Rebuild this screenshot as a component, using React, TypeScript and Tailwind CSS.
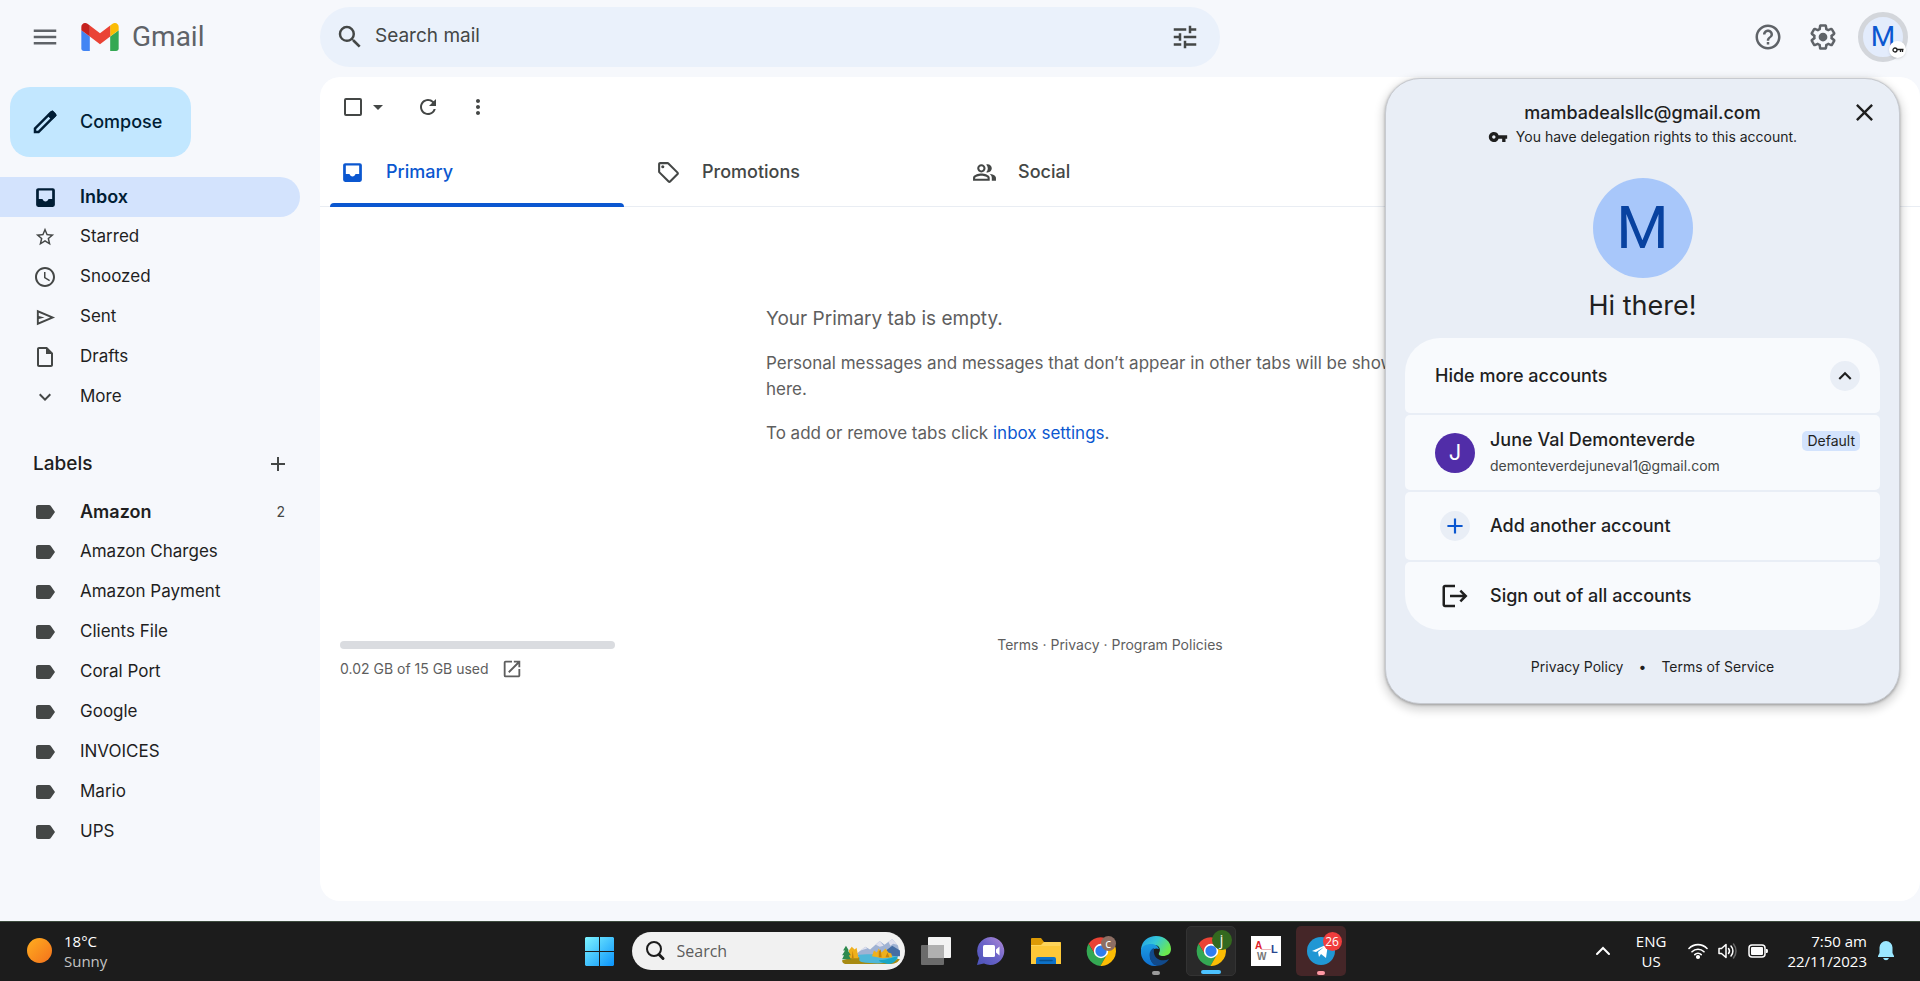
import type { ReactNode } from "react";
import {
  MdAccessTime,
  MdAdd,
  MdArrowDropDown,
  MdClose,
  MdExpandLess,
  MdExpandMore,
  MdHelpOutline,
  MdLabel,
  MdLogout,
  MdMenu,
  MdMoreVert,
  MdOpenInNew,
  MdOutlineInsertDriveFile,
  MdOutlinePeopleAlt,
  MdOutlineSell,
  MdRefresh,
  MdSearch,
  MdStarBorder,
  MdTune,
  MdVpnKey,
} from "react-icons/md";

interface NavItem {
  label: string;
  icon: ReactNode;
  active?: boolean;
}

interface LabelItem {
  label: string;
  count?: number;
}

const labels: LabelItem[] = [
  { label: "Amazon", count: 2 },
  { label: "Amazon Charges" },
  { label: "Amazon Payment" },
  { label: "Clients File" },
  { label: "Coral Port" },
  { label: "Google" },
  { label: "INVOICES" },
  { label: "Mario" },
  { label: "UPS" },
];

const navItems: NavItem[] = [
  { label: "Inbox", icon: <InboxIcon />, active: true },
  { label: "Starred", icon: <MdStarBorder size={22} /> },
  { label: "Snoozed", icon: <MdAccessTime size={24} /> },
  { label: "Sent", icon: <SendIcon /> },
  { label: "Drafts", icon: <MdOutlineInsertDriveFile size={24} /> },
  { label: "More", icon: <MdExpandMore size={24} /> },
];

function InboxIcon() {
  return (
    <svg width="25" height="25" viewBox="0 0 24 24" fill="currentColor" fillRule="evenodd">
      <path d="M5 3h14a2 2 0 0 1 2 2v14a2 2 0 0 1-2 2H5a2 2 0 0 1-2-2V5c0-1.100.9-2 2-2zm.600 2.300v8.200h3.500c.5 1.500 1.500 2.300 2.900 2.300s2.400-.8 2.900-2.300h3.500V5.300z" />
    </svg>
  );
}

function SendIcon() {
  return (
    <svg width="23" height="23" viewBox="0 0 24 24" fill="currentColor" fillRule="evenodd">
      <path d="M3 20V4l19 8zM5 17l11.850-5L5 7v3.500l6 1.500-6 1.500z" />
    </svg>
  );
}

function PencilIcon() {
  return (
    <svg width="30" height="30" viewBox="0 0 24 24" fill="currentColor">
      <path d="M5 19h1.425L16.200 9.225 14.775 7.800 5 17.575V19zm-2 2v-4.250L16.200 3.575q.3-.275.663-.425t.762-.15q.4 0 .775.15t.650.45L20.425 5q.3.275.437.650T21 6.400q0 .4-.138.763t-.437.662L7.250 21H3z" />
      <path d="M14 6l4-3.500 3.500 4L18 10z" />
    </svg>
  );
}

function GearIcon() {
  return (
    <svg width="30" height="30" viewBox="0 0 24 24" fill="currentColor">
      <path d="M13.850 22.250h-3.700c-.74 0-1.360-.54-1.450-1.270l-.27-1.890c-.27-.14-.53-.29-.79-.46l-1.800.72c-.7.26-1.470-.03-1.810-.65L2.200 15.530c-.35-.66-.2-1.440.36-1.880l1.530-1.190c-.01-.15-.02-.3-.02-.46 0-.15.01-.31.02-.46l-1.520-1.190c-.59-.45-.74-1.260-.37-1.880l1.850-3.190c.34-.62 1.110-.9 1.790-.63l1.810.73c.26-.17.52-.32.78-.46l.27-1.910c.09-.7.71-1.250 1.440-1.250h3.700c.74 0 1.360.54 1.450 1.270l.27 1.890c.27.14.53.29.79.46l1.800-.72c.71-.26 1.480.03 1.820.65l1.840 3.180c.36.66.2 1.440-.36 1.880l-1.520 1.190c.01.15.02.3.02.46s-.01.31-.02.46l1.520 1.190c.56.45.72 1.230.37 1.860l-1.860 3.220c-.34.62-1.110.9-1.800.63l-1.800-.72c-.26.17-.52.32-.78.46l-.27 1.910c-.1.68-.72 1.220-1.460 1.220zm-3.230-2h2.760l.37-2.550.53-.22c.44-.18.88-.44 1.340-.78l.45-.34 2.380.96 1.380-2.400-2.030-1.580.07-.56c.03-.26.06-.51.06-.78s-.03-.53-.06-.78l-.07-.56 2.030-1.580-1.390-2.400-2.390.96-.45-.35c-.42-.32-.87-.58-1.330-.77l-.52-.22-.37-2.550h-2.760l-.37 2.550-.53.21c-.44.19-.88.44-1.340.79l-.45.33-2.380-.95-1.390 2.390 2.030 1.580-.07.56a7 7 0 0 0-.06.79c0 .26.02.53.06.78l.07.56-2.030 1.580 1.380 2.400 2.390-.96.45.35c.43.33.86.58 1.330.77l.53.22.38 2.550z" />
      <circle cx="12" cy="12" r="3.500" />
    </svg>
  );
}

function GmailLogo() {
  return (
    <svg width="38" height="28" viewBox="52 42 88 66">
      <path fill="#4285f4" d="M58 108h14V74L52 59v43c0 3.320 2.690 6 6 6" />
      <path fill="#34a853" d="M120 108h14c3.320 0 6-2.690 6-6V59l-20 15" />
      <path fill="#fbbc04" d="M120 48v26l20-15v-8c0-7.420-8.470-11.650-14.400-7.200" />
      <path fill="#ea4335" d="M72 74V48l24 18 24-18v26L96 92" />
      <path fill="#c5221f" d="M52 51v8l20 15V48l-5.600-4.200c-5.940-4.450-14.400-.22-14.400 7.200" />
    </svg>
  );
}

function Header() {
  return (
    <header className="flex h-[77px] shrink-0 items-start">
      <div className="flex h-[74px] w-80 shrink-0 items-center pl-[30px]">
        <button aria-label="Main menu" className="text-[#5f6368]">
          <MdMenu size={30} />
        </button>
        <a href="#inbox" className="ml-[21px] flex items-center gap-[13px]">
          <GmailLogo />
          <span className="font-[Roboto,sans-serif] text-[28px] leading-8 text-[#5f6368]">Gmail</span>
        </a>
      </div>
      <label className="mt-[7px] flex h-[60px] w-[900px] min-w-0 items-center rounded-full bg-[#eaf1fb] pl-[15px] pr-5 text-[#444746]">
        <MdSearch size={30} className="shrink-0" />
        <input
          type="text"
          placeholder="Search mail"
          aria-label="Search mail"
          className="ml-[10px] h-10 min-w-0 flex-1 bg-transparent pb-1 text-[19px] text-[#1f1f1f] outline-none placeholder:text-[#444746]"
        />
        <button aria-label="Show search options">
          <MdTune size={30} />
        </button>
      </label>
      <div className="ml-auto flex h-[74px] shrink-0 items-center pr-3 text-[#5f6368]">
        <button aria-label="Support">
          <MdHelpOutline size={30} />
        </button>
        <button aria-label="Settings" className="ml-[25px]">
          <GearIcon />
        </button>
        <button
          aria-label="Google Account"
          className="relative ml-5 flex size-[50px] items-center justify-center rounded-full border-[5px] border-[#d3d6db] bg-[#e3ecfc] font-[Roboto,sans-serif] text-[28px] text-[#0b57d0]"
        >
          M
          <span className="absolute -bottom-px -right-[3px] flex size-[17px] items-center justify-center rounded-full bg-white text-[#1f1f1f] shadow">
            <svg width="12" height="6" viewBox="0 0 12 6" fill="none" stroke="currentColor" strokeWidth="1.300">
              <circle cx="3" cy="3" r="2" />
              <path d="M5 2.500h6.500M8.500 3v2M10.500 3v2" />
            </svg>
          </span>
        </button>
      </div>
    </header>
  );
}

function Sidebar() {
  return (
    <aside className="w-80 shrink-0 pr-5 pt-[10px] text-[17px] text-[#1f1f1f]">
      <button className="ml-[10px] flex h-[70px] items-center gap-5 rounded-[20px] bg-[#c2e7ff] pl-5 pr-[29px] text-lg font-medium text-[#001d35]">
        <PencilIcon />
        Compose
      </button>
      <nav className="mt-5">
        {navItems.map((item) => (
          <a
            key={item.label}
            href={`#${item.label.toLowerCase()}`}
            className={
              item.active
                ? "flex h-10 items-center rounded-r-full bg-[#d3e3fd] pl-[30px] text-lg font-semibold text-[#001d35]"
                : "flex h-10 items-center pl-[30px]"
            }
          >
            <span className={item.active ? "flex w-[50px]" : "flex w-[50px] text-[#444746]"}>
              <span className="flex w-[30px] justify-center">{item.icon}</span>
            </span>
            {item.label}
          </a>
        ))}
      </nav>
      <div className="mt-[27px] flex h-10 items-center justify-between pl-[33px] pr-[10px]">
        <h2 className="text-[19px] font-medium">Labels</h2>
        <button aria-label="Create new label" className="text-[#444746]">
          <MdAdd size={24} />
        </button>
      </div>
      <nav className="mt-2">
        {labels.map((item) => (
          <a
            key={item.label}
            href={`#label/${item.label}`}
            className={
              item.count
                ? "flex h-10 items-center pl-[33px] pr-[15px] text-lg font-semibold"
                : "flex h-10 items-center pl-[33px] pr-[15px]"
            }
          >
            <MdLabel size={24} className="mr-[23px] text-[#444746]" />
            {item.label}
            {item.count && <span className="ml-auto text-sm font-normal text-[#444746]">{item.count}</span>}
          </a>
        ))}
      </nav>
    </aside>
  );
}

function Tab({ label, icon, active }: NavItem) {
  return (
    <button
      role="tab"
      aria-selected={!!active}
      className={
        active
          ? "relative -mb-px flex h-[70px] w-[316px] items-center gap-[21px] pl-5 font-medium text-[#0b57d0]"
          : "relative -mb-px flex h-[70px] w-[316px] items-center gap-[21px] pl-5 font-medium text-[#444746]"
      }
    >
      {icon}
      {label}
      {active && <span className="absolute bottom-0 left-[10px] right-3 h-1 rounded-t bg-[#0b57d0]" />}
    </button>
  );
}

function MailPane() {
  return (
    <main className="mb-5 min-w-0 flex-1 rounded-[20px] bg-white">
      <div className="flex h-[60px] items-center pl-6 text-[#444746]">
        <input
          type="checkbox"
          aria-label="Select"
          className="size-[18px] appearance-none rounded-[2px] border-2 border-[#444746]"
        />
        <button aria-label="Select options" className="ml-1">
          <MdArrowDropDown size={24} />
        </button>
        <button aria-label="Refresh" className="ml-[26px]">
          <MdRefresh size={24} />
        </button>
        <button aria-label="More options" className="ml-[26px]">
          <MdMoreVert size={24} />
        </button>
      </div>
      <div role="tablist" className="flex border-b border-[#e9edf3] text-lg">
        <Tab label="Primary" icon={<InboxIcon />} active />
        <Tab label="Promotions" icon={<MdOutlineSell size={25} />} />
        <Tab label="Social" icon={<MdOutlinePeopleAlt size={25} />} />
      </div>
      <div className="pr-5">
        <section className="mx-auto mt-[97px] max-w-[688px] pr-6 text-[17px] leading-[26px] text-[#5e5e5e]">
          <h1 className="text-[19px] leading-[30px]">Your Primary tab is empty.</h1>
          <p className="mt-4">
            Personal messages and messages that don’t appear in other tabs will be shown here.
          </p>
          <p className="mt-[18px]">
            To add or remove tabs click{" "}
            <a href="#settings/inbox" className="text-[#0b57d0]">
              inbox settings
            </a>
            .
          </p>
        </section>
        <footer className="mt-[187px] grid grid-cols-3 px-5 text-sm leading-6 text-[#5e5e5e]">
          <div>
            <div className="mt-2 h-2 w-[275px] rounded-full bg-[#dadce0]" />
            <div className="mt-2 flex items-center gap-3">
              0.02 GB of 15 GB used
              <a href="#storage" aria-label="Manage storage">
                <MdOpenInNew size={22} />
              </a>
            </div>
          </div>
          <p className="text-center">
            <a href="#terms">Terms</a> · <a href="#privacy">Privacy</a> · <a href="#policies">Program Policies</a>
          </p>
        </footer>
      </div>
    </main>
  );
}

function AccountMenu() {
  return (
    <div
      role="dialog"
      aria-label="Account"
      className="absolute right-5 top-[78px] w-[515px] rounded-[35px] border border-[#c7cad0] bg-[#e9eef6] px-[19px] pb-6 pt-[22px] text-[#1f1f1f] shadow-[0_4px_8px_3px_rgba(0,0,0,0.15),0_1px_3px_rgba(0,0,0,0.3)]"
    >
      <button aria-label="Close" className="absolute right-[20px] top-[19px]">
        <MdClose size={29} />
      </button>
      <p className="text-center text-lg font-medium leading-6">mambadealsllc@gmail.com</p>
      <p className="flex h-6 items-center justify-center gap-2 text-sm">
        <MdVpnKey size={20} />
        You have delegation rights to this account.
      </p>
      <div className="mx-auto mt-[29px] flex size-[100px] items-center justify-center rounded-full bg-[#a8c7fa] font-[Roboto,sans-serif] text-[60px] leading-none text-[#0842a0]">
        M
      </div>
      <p className="mt-2 text-center text-[27px] leading-10">Hi there!</p>
      <div className="mt-3 flex flex-col gap-[2px] text-lg font-medium">
        <button className="flex h-[75px] items-center justify-between rounded-b-[5px] rounded-t-[35px] bg-[#f8fafd] pl-[30px] pr-5">
          Hide more accounts
          <span className="flex size-[30px] items-center justify-center rounded-full bg-[#e9eef6]">
            <MdExpandLess size={26} />
          </span>
        </button>
        <button className="flex h-[75px] items-center rounded-[5px] bg-[#f8fafd] pl-[30px] pr-5 text-left">
          <span className="flex size-10 items-center justify-center rounded-full bg-[#512da8] text-[22px] font-normal text-white">
            J
          </span>
          <span className="ml-[15px] leading-[26px]">
            June Val Demonteverde
            <span className="block text-sm font-normal leading-[26px] text-[#444746]">
              demonteverdejuneval1@gmail.com
            </span>
          </span>
          <span className="mb-6 ml-auto rounded-[5px] bg-[#d3e3fd] px-[5px] text-sm font-normal leading-5">
            Default
          </span>
        </button>
        <button className="flex h-[68px] items-center rounded-[5px] bg-[#f8fafd] pl-[30px]">
          <span className="flex w-10 justify-center">
            <span className="flex size-[30px] items-center justify-center rounded-full bg-[#e9eef6] text-[#0b57d0]">
              <MdAdd size={26} />
            </span>
          </span>
          <span className="ml-[15px]">Add another account</span>
        </button>
        <button className="flex h-[68px] items-center rounded-b-[35px] rounded-t-[5px] bg-[#f8fafd] pl-[30px]">
          <span className="flex w-10 justify-center">
            <MdLogout size={30} />
          </span>
          <span className="ml-[15px]">Sign out of all accounts</span>
        </button>
      </div>
      <p className="mt-[25px] flex justify-center gap-[15px] pl-5 text-sm leading-6">
        <a href="#privacy">Privacy Policy</a>
        <span>•</span>
        <a href="#terms">Terms of Service</a>
      </p>
    </div>
  );
}

function ChromeLogo() {
  return (
    <svg width="30" height="30" viewBox="0 0 48 48">
      <path fill="#ea4335" d="M24 24V13h19A23 23 0 0 0 4 12.500L14.500 29.500z" />
      <path fill="#34a853" d="M14.500 29.500L4 12.500A24 24 0 0 0 23 48l10.500-18.500L24 24z" />
      <path fill="#fbbc04" d="M24 13h21.300A24 24 0 0 1 23 48l10.500-18.500L24 24z" />
      <circle cx="24" cy="24" r="11.500" fill="#fff" />
      <circle cx="24" cy="24" r="9" fill="#2f7df0" />
    </svg>
  );
}

function EdgeLogo() {
  return (
    <svg width="30" height="30" viewBox="0 0 30 30">
      <defs>
        <linearGradient id="edge-top" x1="0" y1="0" x2="1" y2="0.500">
          <stop offset="0" stopColor="#1f9be8" />
          <stop offset="0.500" stopColor="#36c8d8" />
          <stop offset="1" stopColor="#6be84e" />
        </linearGradient>
        <linearGradient id="edge-left" x1="0" y1="0" x2="0" y2="1">
          <stop offset="0" stopColor="#1b9de2" />
          <stop offset="1" stopColor="#0f6fd0" />
        </linearGradient>
      </defs>
      <path fill="url(#edge-top)" d="M0 13C1 5 7 0 15 0c9 0 15 6 15 13 0 5-4 7-8 7-3 0-5-1-4-3 2-3 1-8-5-8C7 9 2 10 0 15z" />
      <path fill="url(#edge-left)" d="M0 14c1-4 5-6 10-6 4 0 7 2 8 5-5-2-9 2-9 7 0 6 5 9 8 10C6 31-1 23 0 14z" />
      <path fill="#114a8b" d="M13 12c-6 2-6 11 0 17 6 2 12-1 15-6-6 3-14 1-15-6-.3-2 0-4 0-5z" />
    </svg>
  );
}

function LakeArt() {
  return (
    <svg width="60" height="27" viewBox="0 0 62 28" className="shrink-0">
      <path fill="#9fb2d3" d="M14 17L24 9l5 3 10-9 5 4 8-6 6 7 2 10-8 4H16z" />
      <path fill="#dfe0ee" d="M35 7l4-4 4 5-4 1zM48 4l4-3 5 6-4-1-3 2zM26 11l-2-2-5 4z" />
      <path fill="#456da4" d="M44 14l8-6 8 5v6H44z" />
      <path fill="#a78a12" d="M0 23l12-3h36l12 2c-3 4-6 5-11 5H6c-4 0-6-1-6-4z" />
      <path fill="#4fb7d8" d="M15 18c10-2 30-1 40 1 5 2 2 4-3 6-10 2-20 2-32 0-5-2 1-4-5-7z" />
      <path fill="#1aa7c5" d="M38 23c8 0 14-3 20-4-2 5-5 8-10 8-5-1-9-2-10-4z" />
      <path fill="#efb01c" d="M7 13l3-4 3 3 2-2 2 11H7zM31 19l2-6 3 2 2-4 3 4 4-4 3 4 3 1 1 4-10 1z" />
      <path fill="#c5830c" d="M38 14l2-2 1 8h-3zM47 15l2 5h-4zM11 13l1 8h-2z" />
      <path fill="#2e8a4f" d="M4 8l3 5H6l3 5H7l2 4H0l2-4H0l3-5H1z" />
    </svg>
  );
}

interface TaskTileProps {
  label: string;
  children: ReactNode;
  className?: string;
  indicator?: string;
}

function TaskTile({ label, children, className, indicator }: TaskTileProps) {
  return (
    <button
      aria-label={label}
      className={`relative flex size-[50px] items-center justify-center rounded-[5px] ${className ?? ""}`}
    >
      {children}
      {indicator && <span className={`absolute bottom-px h-1 rounded-full ${indicator}`} />}
    </button>
  );
}

function Taskbar() {
  return (
    <footer className="grid h-[60px] shrink-0 grid-cols-[1fr_auto_1fr] items-center border-t border-[#3c4a3c] bg-[#1c1c1c] font-['Open_Sans','Noto_Sans',sans-serif] text-[15px] leading-5 text-white">
      <div className="flex items-center gap-3 pb-[2px] pl-[27px]">
        <span className="size-[25px] rounded-full bg-linear-to-br from-[#ffae1f] to-[#f2701c]" />
        <p>
          18°C
          <span className="block text-[#c4c4c4]">Sunny</span>
        </p>
      </div>
      <div className="flex items-center gap-[5px] pb-px">
        <TaskTile label="Start">
          <svg width="29" height="29" viewBox="0 0 29 29">
            <defs>
              <linearGradient id="win" x1="0" y1="0" x2="1" y2="1">
                <stop offset="0" stopColor="#7df3ff" />
                <stop offset="1" stopColor="#0a93fb" />
              </linearGradient>
            </defs>
            <path fill="url(#win)" d="M1 0h13v14H0V1zM15 0h13l1 1v13H15zM0 15h14v14H1l-1-1zM15 15h14v13l-1 1H15z" />
          </svg>
        </TaskTile>
        <label className="ml-[2px] mr-px flex h-[38px] w-[273px] items-center rounded-full bg-[#f1f1f1] pl-3 pr-[3px] text-[#1c1c1c]">
          <svg width="22" height="22" viewBox="0 0 22 22" fill="none" stroke="currentColor" strokeWidth="2" className="shrink-0">
            <circle cx="10" cy="9" r="7" />
            <path strokeWidth="3" strokeLinecap="round" d="M15 14.500l4 4" />
          </svg>
          <input
            type="text"
            placeholder="Search"
            aria-label="Search Windows"
            className="ml-[11px] min-w-0 flex-1 bg-transparent text-base outline-none placeholder:text-[#5c5c5c]"
          />
          <LakeArt />
        </label>
        <TaskTile label="Task View">
          <svg width="30" height="28" viewBox="0 0 30 28">
            <rect x="7" width="23" height="21" rx="1" fill="#f3f3f3" />
            <rect y="8" width="23" height="20" rx="1" fill="#6b6b6b" />
            <path fill="#b0b0b0" d="M7 8h16v13H7z" />
          </svg>
        </TaskTile>
        <TaskTile label="Chat">
          <svg width="30" height="30" viewBox="0 0 30 30">
            <defs>
              <linearGradient id="chat" x1="0" y1="1" x2="1" y2="0">
                <stop offset="0" stopColor="#4a52b8" />
                <stop offset="0.500" stopColor="#6a63c8" />
                <stop offset="1" stopColor="#b48bd8" />
              </linearGradient>
            </defs>
            <path fill="url(#chat)" d="M15 1a14 14 0 1 1-7 26.500L1 29l2-7A14 14 0 0 1 15 1z" />
            <rect x="7" y="9" width="12" height="12" rx="1.500" fill="#fff" />
            <path fill="#fff" d="M20 13.500l3.500-3v9l-3.500-3z" />
          </svg>
        </TaskTile>
        <TaskTile label="File Explorer">
          <svg width="30" height="28" viewBox="0 0 30 28">
            <path fill="#dc9a05" d="M0 2q0-1 1-1h9l3 4h16q1 0 1 1v9H0z" />
            <path fill="#fdc838" d="M0 8h10l3-3h16q1 0 1 1v21H0z" />
            <path fill="#ffe07a" d="M0 8h10l3-3h16v4H0z" opacity="0.500" />
            <path fill="#0d72c9" d="M5 27v-5q0-2 2-2h16q2 0 2 2v5z" />
            <path stroke="#08508f" strokeWidth="1.500" strokeLinecap="round" d="M9 23.500h12" />
          </svg>
        </TaskTile>
        <TaskTile label="Chrome">
          <ChromeLogo />
          <span className="absolute right-[10px] top-[10px] flex size-[15px] items-center justify-center rounded-full bg-[#8d6e63] text-xs leading-none">
            c
          </span>
        </TaskTile>
        <TaskTile label="Edge" indicator="w-2 bg-[#9a9a9a]">
          <EdgeLogo />
        </TaskTile>
        <TaskTile label="Chrome, active" className="border border-[#333333] bg-[#292929]" indicator="w-5 bg-[#4cc2ff]">
          <ChromeLogo />
          <span className="absolute right-[3px] top-[3px] flex size-5 items-center justify-center rounded-full bg-[#33691e] text-sm leading-none">
            j
          </span>
        </TaskTile>
        <TaskTile label="AWL">
          <svg width="30" height="30" viewBox="0 0 30 30" fontFamily="Liberation Sans, sans-serif" fontWeight="bold">
            <rect width="30" height="30" fill="#fff" />
            <path stroke="#eeb5b5" d="M10 13.500h10" />
            <text x="4" y="13" fontSize="10" fill="#e0202a">A</text>
            <text x="6" y="24" fontSize="10" fill="#777">W</text>
            <text x="20" y="17" fontSize="11" fill="#27468f">L</text>
          </svg>
        </TaskTile>
        <TaskTile label="Telegram" className="bg-[#452628]" indicator="w-2 bg-[#ff99a4]">
          <svg width="28" height="28" viewBox="0 0 28 28">
            <circle cx="14" cy="14" r="14" fill="#2197d4" />
            <path fill="#fff" d="M5 14L21 7l-2 14-5-4-2 3-1-5 6-5-8 5z" />
          </svg>
          <span className="absolute right-1 top-[6px] flex size-[19px] items-center justify-center rounded-full bg-[#f03d3d] text-xs leading-none">
            26
          </span>
        </TaskTile>
      </div>
      <div className="flex items-center justify-end pb-[2px] pr-[26px]">
        <button aria-label="Show hidden icons">
          <svg width="16" height="10" viewBox="0 0 16 10" fill="none" stroke="currentColor" strokeWidth="2" strokeLinecap="round">
            <path d="M2 8l6-6 6 6" />
          </svg>
        </button>
        <p className="ml-[25px] text-center">
          ENG
          <span className="block">US</span>
        </p>
        <svg width="20" height="18" viewBox="0 0 20 18" fill="none" stroke="currentColor" strokeWidth="1.600" strokeLinecap="round" className="ml-[22px]">
          <path d="M1 6.500a12.500 12.500 0 0 1 18 0M4 9.800a8.500 8.500 0 0 1 12 0M6.800 12.600a4.500 4.500 0 0 1 6.400 0" />
          <circle cx="10" cy="15" r="1.300" fill="currentColor" />
        </svg>
        <svg width="20" height="18" viewBox="0 0 20 18" fill="none" stroke="currentColor" strokeWidth="1.500" strokeLinecap="round" strokeLinejoin="round" className="ml-[10px]">
          <path d="M1 6.500h2.500L8 2.500v13l-4.500-4H1zM10.500 6.500a4 4 0 0 1 0 5M13 4a7.500 7.500 0 0 1 0 10" />
          <path stroke="#666" d="M15.500 2a11 11 0 0 1 0 14" />
        </svg>
        <svg width="21" height="14" viewBox="0 0 21 14" className="ml-[10px]">
          <rect x="1" y="1" width="16" height="12" rx="3" fill="none" stroke="#fff" strokeWidth="1.500" />
          <rect x="3" y="3" width="12" height="8" rx="1" fill="#fff" />
          <path fill="#fff" d="M18 5h1q1 0 1 2t-1 2h-1z" />
        </svg>
        <p className="ml-[18px] text-right">
          7:50 am
          <span className="block">22/11/2023</span>
        </p>
        <svg width="16" height="20" viewBox="0 0 16 20" fill="#9be7ff" className="ml-[11px]">
          <path d="M8 0a6.500 6.500 0 0 1 6.500 6.500V12L16 15v1H0v-1l1.500-3V6.500A6.500 6.500 0 0 1 8 0zM5 17h6q-1 2.200-3 2.200T5 17z" />
        </svg>
      </div>
    </footer>
  );
}

export default function App() {
  return (
    <div className="relative flex min-h-screen flex-col bg-[#f6f8fc] font-[Inter,'Liberation_Sans',sans-serif]">
      <Header />
      <div className="flex flex-1">
        <Sidebar />
        <MailPane />
      </div>
      <Taskbar />
      <AccountMenu />
    </div>
  );
}
